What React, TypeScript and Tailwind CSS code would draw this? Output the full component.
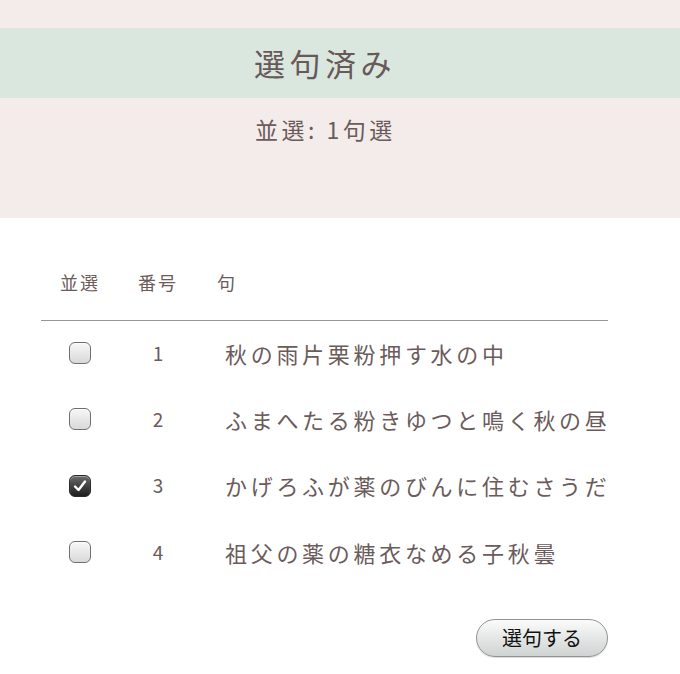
import { useState } from "react";

const FONT = { fontFamily: '"Noto Sans CJK JP", "Noto Sans", sans-serif' };

const ROWS = [
  { no: 1, ku: "秋の雨片栗粉押す水の中" },
  { no: 2, ku: "ふまへたる粉きゆつと鳴く秋の昼" },
  { no: 3, ku: "かげろふが薬のびんに住むさうだ" },
  { no: 4, ku: "祖父の薬の糖衣なめる子秋曇" },
];

function Check({ on, onClick }: { on: boolean; onClick: () => void }) {
  return (
    <button
      onClick={onClick}
      aria-pressed={on}
      className={
        on
          ? "flex h-[22px] w-[22px] items-center justify-center rounded-[6px] border border-[#2a2a2a] bg-gradient-to-b from-[#6a6a6a] to-[#1f1f1f] shadow-[inset_0_1px_1px_rgba(255,255,255,0.4)]"
          : "h-[22px] w-[22px] rounded-[6px] border border-[#6f6f6f] bg-gradient-to-b from-[#f7f7f7] to-[#d9d9d9] shadow-[inset_0_1px_1px_rgba(255,255,255,0.9)]"
      }
    >
      {on && (
        <svg width="16" height="16" viewBox="0 0 16 16">
          <path
            d="M3 8.5 L6.5 12 L13 3.5"
            fill="none"
            stroke="#fff"
            strokeWidth="2.4"
            strokeLinecap="round"
            strokeLinejoin="round"
          />
        </svg>
      )}
    </button>
  );
}

export default function App() {
  const [picked, setPicked] = useState<number[]>([3]);
  const toggle = (n: number) =>
    setPicked((p) => (p.includes(n) ? p.filter((x) => x !== n) : [...p, n]));

  return (
    <div className="min-h-[674px] w-[680px] bg-white text-[#6b5b5b]" style={FONT}>
      {/* header band */}
      <div className="h-[218px] bg-[#f4ecea] pt-[28px]">
        <div className="flex h-[70px] items-center bg-[#d9e7df] pl-[254px]">
          <h1 className="text-[31px] tracking-[4.5px] text-[#685858]">選句済み</h1>
        </div>
        <p className="mt-[14px] pl-[255px] text-[23px] tracking-[3.5px]">並選: 1句選</p>
      </div>

      {/* table */}
      <div className="ml-[41px] w-[567px] pt-[50px]">
        <div className="grid grid-cols-[78px_78px_1fr] border-b border-[#9c9494] pb-[24px] text-[18px] leading-[28px]">
          <span className="text-center tracking-[2px]">並選</span>
          <span className="text-center tracking-[2px]">番号</span>
          <span className="pl-[20px]">句</span>
        </div>
        <div className="-mt-[1px]">
          {ROWS.map((r) => (
            <div key={r.no} className="grid h-[66.3px] grid-cols-[78px_78px_1fr] items-center">
              <div className="flex justify-center">
                <Check on={picked.includes(r.no)} onClick={() => toggle(r.no)} />
              </div>
              <span className="text-center text-[19px]">{r.no}</span>
              <span className="whitespace-nowrap pl-[28px] text-[22px] tracking-[3.7px]">{r.ku}</span>
            </div>
          ))}
        </div>
        <div className="mt-[34px] flex justify-end">
          <button className="h-[38px] w-[132px] rounded-full border border-[#8f9594] bg-gradient-to-b from-[#fbfbfb] to-[#cfd3d2] text-[20px] text-[#111] shadow-[0_1px_1px_rgba(0,0,0,0.15)]">
            選句する
          </button>
        </div>
      </div>
    </div>
  );
}
